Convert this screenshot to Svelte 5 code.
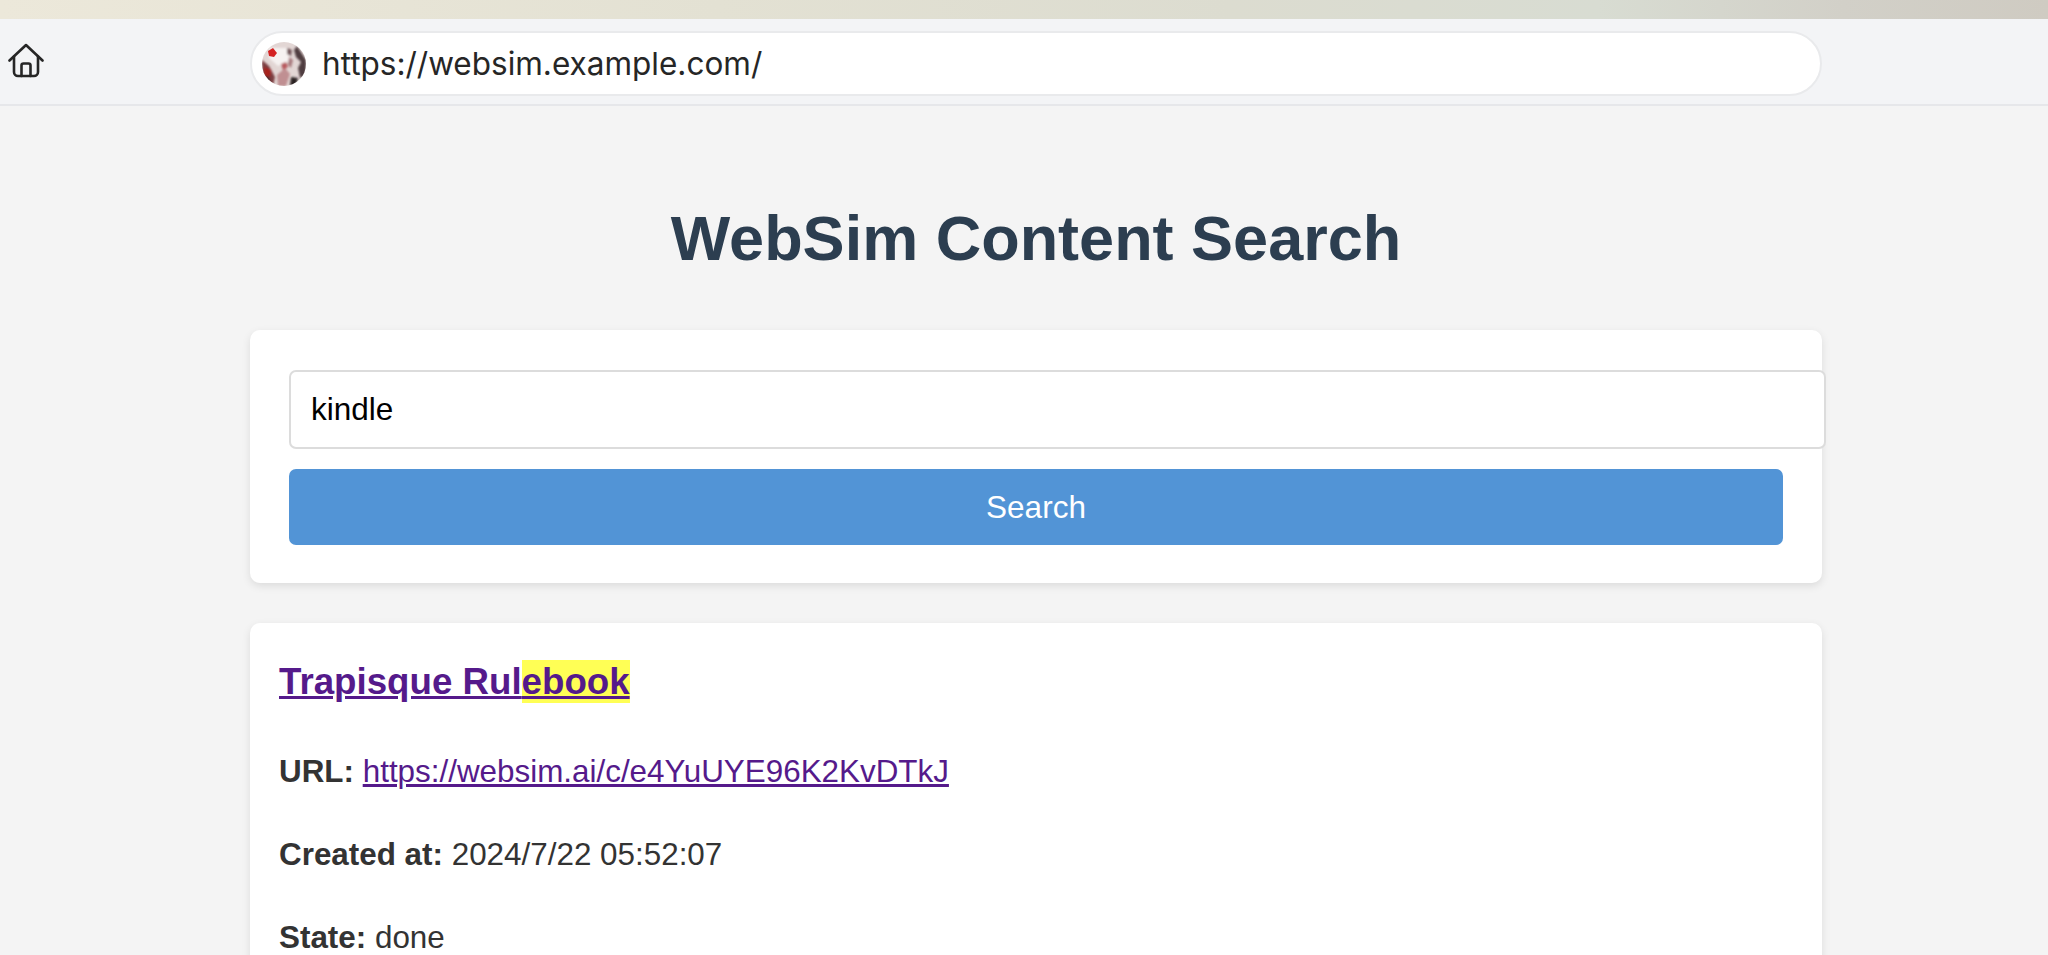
<script>
	let query = 'kindle';
</script>

<div class="frame">
	<div class="wallpaper"></div>

	<header class="toolbar">
		<button class="home" aria-label="Home">
			<svg width="36" height="35" viewBox="0 0 36 35" fill="none" stroke="#262626" stroke-width="2.6" stroke-linecap="round" stroke-linejoin="round">
				<path d="M1.5 17.5 18 2 34.5 17.5" />
				<path d="M6 13.5V29a4 4 0 0 0 4 4h16a4 4 0 0 0 4-4V13.5" />
				<path d="M13.5 33V22.5a2 2 0 0 1 2-2h5a2 2 0 0 1 2 2V33" />
			</svg>
		</button>
		<div class="address">
			<svg class="favicon" width="44" height="44" viewBox="0 0 44 44">
				<defs>
					<clipPath id="fav"><circle cx="22" cy="22" r="22" /></clipPath>
					<filter id="soft"><feGaussianBlur stdDeviation="0.8" /></filter>
				</defs>
				<g clip-path="url(#fav)">
					<rect width="44" height="44" fill="#e2d6d4" />
					<g filter="url(#soft)">
						<path d="M0 18 7 24 13 35 11 44H0Z" fill="#7c3c40" />
						<path d="M2 25l7 3-1 7-6-1Z" fill="#a8201f" />
						<path d="M0 33l7 2 2 9H0Z" fill="#3c2a2c" />
						<path d="M35 4l9 14v16l-6 2-2-10 3-6-5-5-2-7Z" fill="#4f3c40" />
						<path d="M15 33l8-7 5 6-4 12h-8Z" fill="#c08f92" />
						<path d="M7 6h19l1 13-11 5-9-8Z" fill="#f6f2f1" />
						<path d="M25 6l5 2-1 6-4-2Z" fill="#75585c" />
						<path d="M27 15l4 3-2 8-3-3Z" fill="#a87a7e" />
						<path d="M19 22l5-2 2 5-5 3Z" fill="#b85a5e" />
						<path d="M29 35l7 1-2 8h-6Z" fill="#2c2224" />
					</g>
					<path d="M6 9l5-3 4 5-3 4-5-1Z" fill="#d42222" />
				</g>
			</svg>
			<span class="url">https://websim.example.com/</span>
		</div>
	</header>

	<main>
		<h1>WebSim Content Search</h1>

		<form class="card search" on:submit|preventDefault>
			<input type="text" bind:value={query} />
			<button type="submit">Search</button>
		</form>

		<article class="card result">
			<h2><a href="https://websim.ai/c/e4YuUYE96K2KvDTkJ">Trapisque Rul<mark>ebook</mark></a></h2>
			<p><strong>URL:</strong> <a href="https://websim.ai/c/e4YuUYE96K2KvDTkJ">https://websim.ai/c/e4YuUYE96K2KvDTkJ</a></p>
			<p><strong>Created at:</strong> 2024/7/22 05:52:07</p>
			<p><strong>State:</strong> done</p>
		</article>
	</main>
</div>

<style>
	:global(body) {
		margin: 0;
		background: #f4f4f4;
		font-family: 'Liberation Sans', Arial, sans-serif;
		color: #333;
	}

	.frame {
		height: 955px;
		overflow: hidden;
	}

	.wallpaper {
		height: 19px;
		background: linear-gradient(90deg, #ece8da 0%, #e3e1d3 35%, #dcdcd0 60%, #d8dcd2 78%, #d2d0c8 90%, #cfcbc2 100%);
	}

	.toolbar {
		display: flex;
		align-items: center;
		box-sizing: border-box;
		height: 87px;
		padding: 4px 0 0 8px;
		background: #f3f4f6;
		border-bottom: 2px solid #e6e7ea;
	}

	.home {
		display: flex;
		padding: 0;
		border: none;
		background: none;
		margin: -6px 206px 0 0;
	}

	.address {
		display: flex;
		align-items: center;
		box-sizing: border-box;
		width: 1572px;
		height: 65px;
		padding-left: 10px;
		background: #fff;
		border: 2px solid #e9eaec;
		border-radius: 33px;
	}

	.favicon {
		flex: none;
		margin-right: 16px;
	}

	.url {
		font-family: Inter, sans-serif;
		font-size: 31.5px;
		color: #262626;
	}

	main {
		width: 1572px;
		margin-left: 250px;
	}

	h1 {
		margin: 0;
		padding: 96px 0 56px;
		font-size: 63px;
		line-height: 72px;
		font-weight: 700;
		text-align: center;
		color: #2c3e50;
	}

	.card {
		background: #fff;
		border-radius: 10px;
		box-shadow: 0 3px 8px rgba(0, 0, 0, 0.1);
	}

	.search {
		padding: 40px 39px 39px;
		height: 174px;
	}

	input {
		display: block;
		box-sizing: content-box;
		width: 100%;
		height: 75px;
		padding: 0 19px 0 20px;
		margin: 0 0 20px;
		border: 2px solid #dcdcdc;
		border-radius: 7px;
		background: #fff;
		font-family: 'Liberation Sans', Arial, sans-serif;
		font-size: 31.5px;
		color: #000;
		outline: none;
	}

	.search button {
		display: block;
		width: 100%;
		height: 76px;
		padding: 0;
		border: none;
		border-radius: 7px;
		background: #5294d6;
		font-family: 'Liberation Sans', Arial, sans-serif;
		font-size: 31.5px;
		color: #fff;
	}

	.result {
		margin-top: 40px;
		padding: 31px 29px;
		height: 500px;
	}

	h2 {
		margin: 0;
		font-size: 36.7px;
		line-height: 56px;
	}

	a {
		color: #551a8b;
	}

	mark {
		background: #ffff55;
		color: inherit;
		padding: 1px 0;
	}

	p {
		margin: 41px 0 0;
		font-size: 31.4px;
		line-height: 42px;
	}
</style>
